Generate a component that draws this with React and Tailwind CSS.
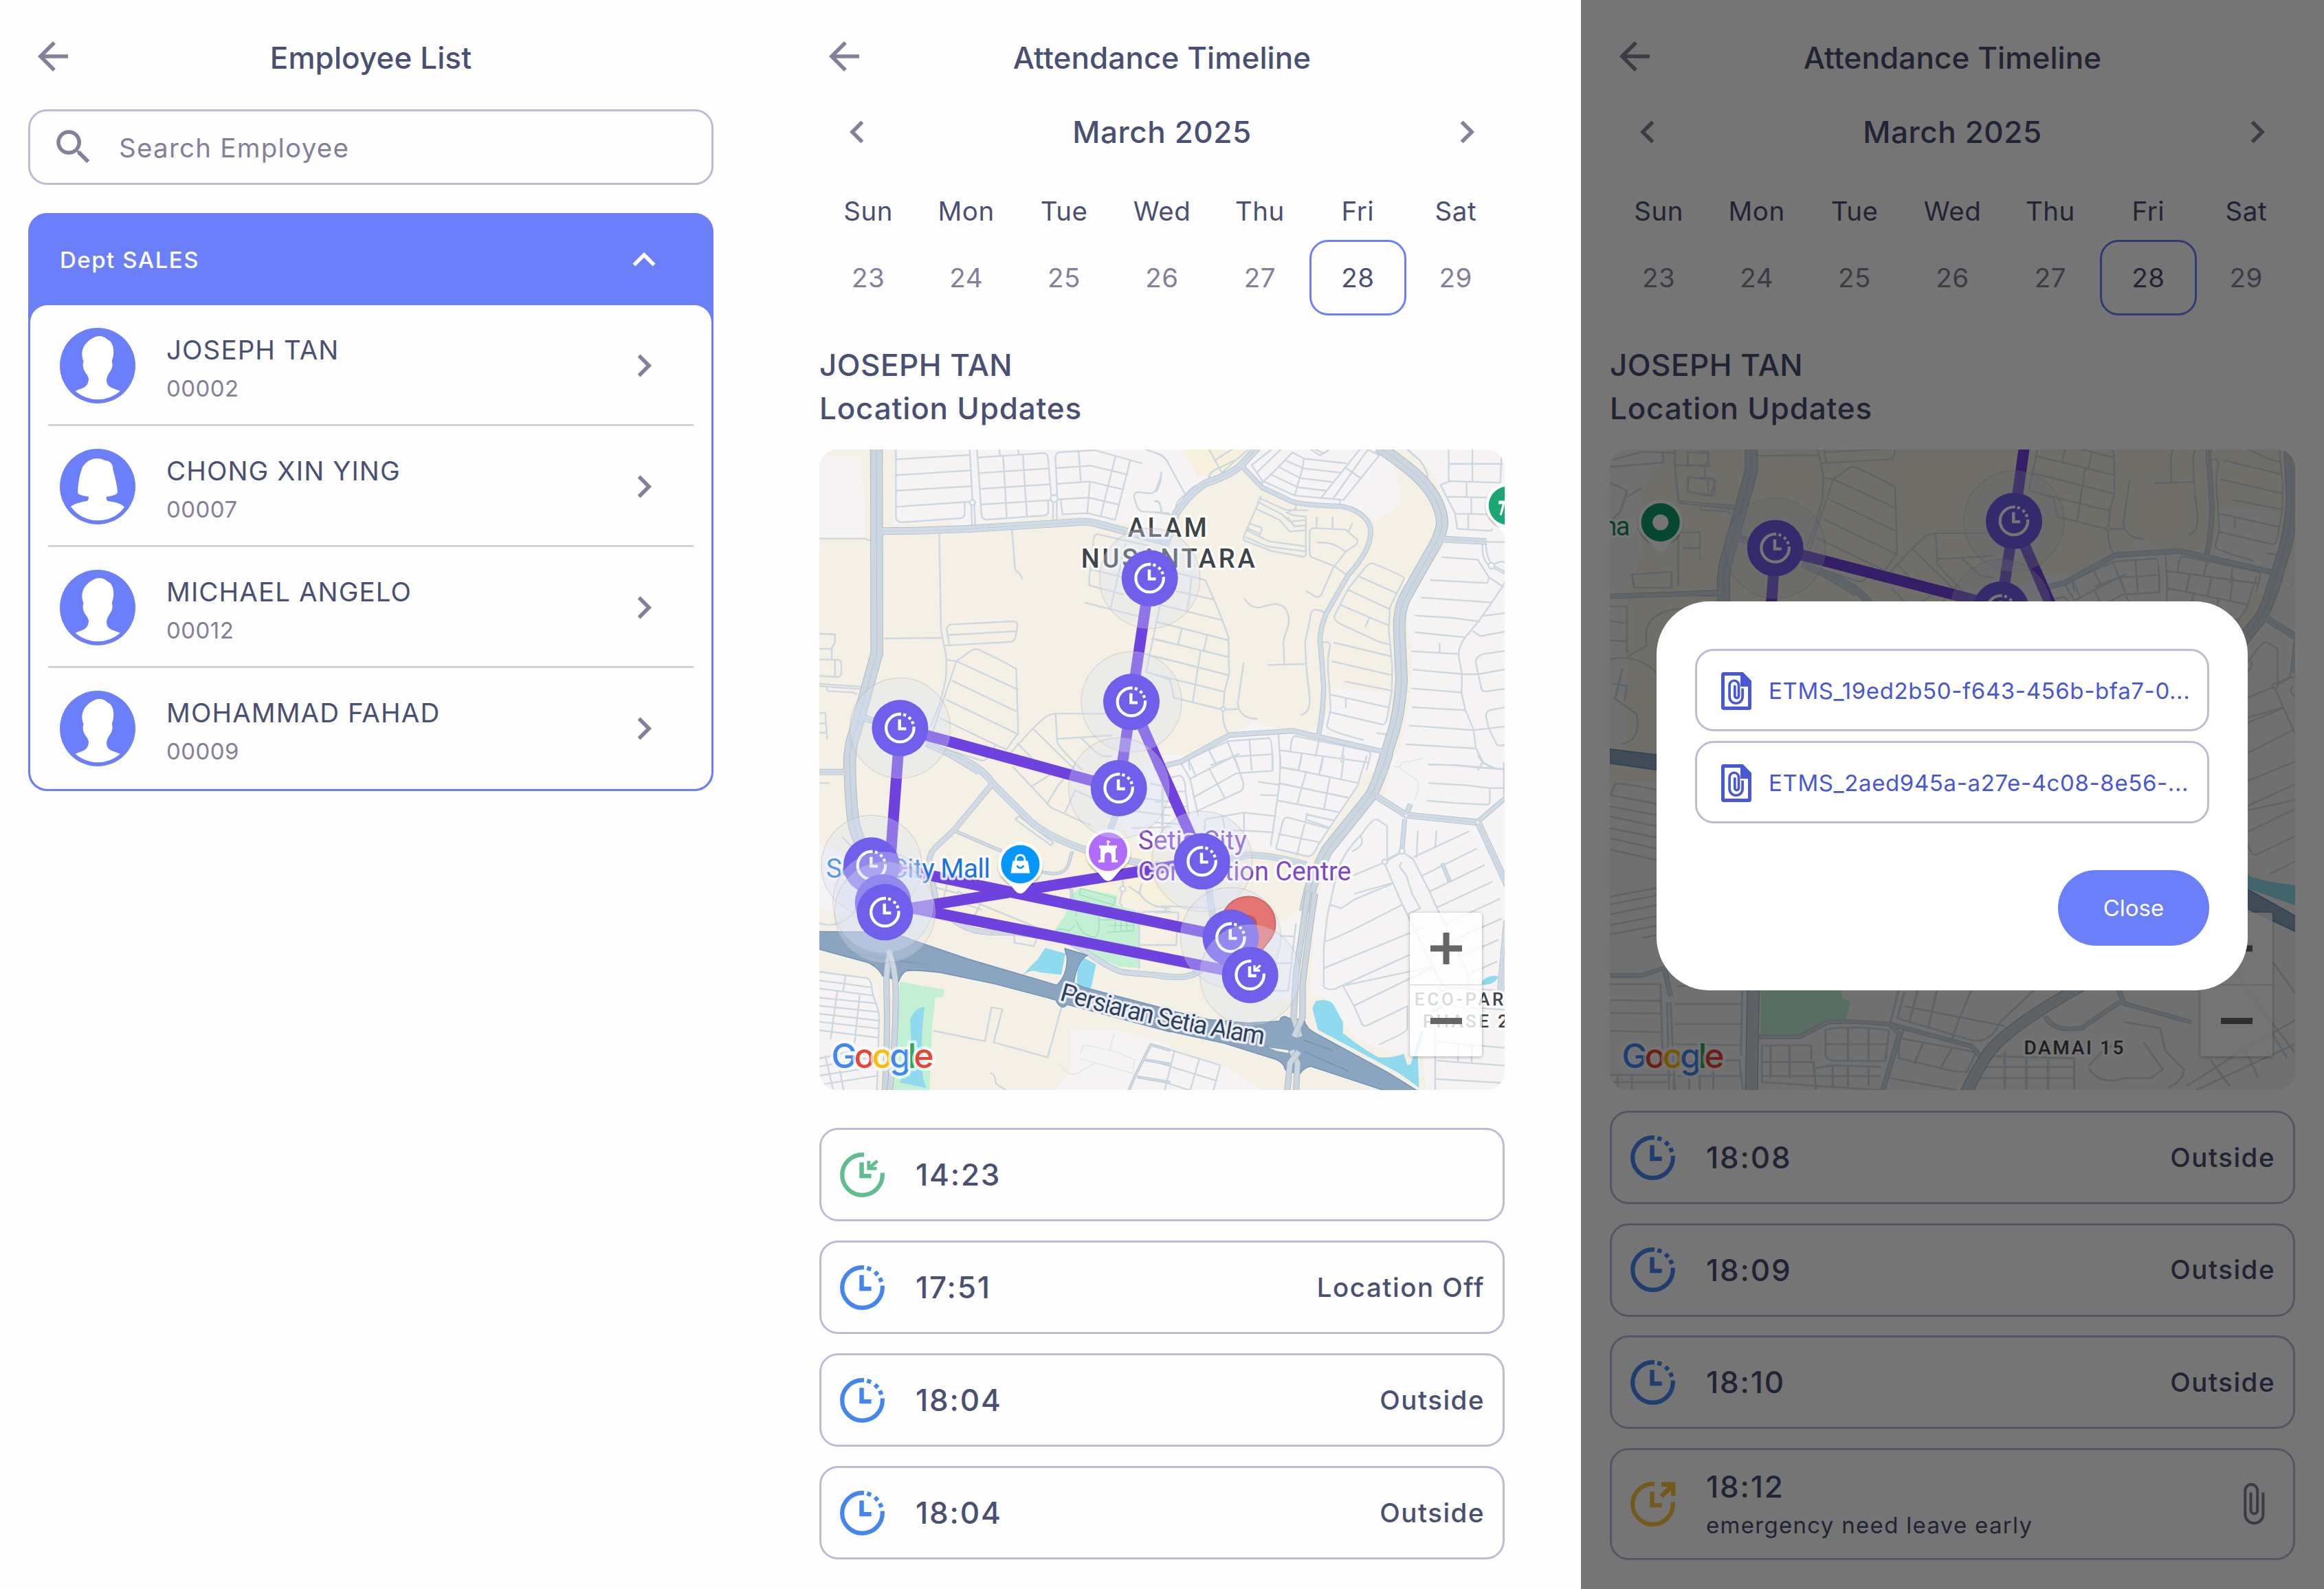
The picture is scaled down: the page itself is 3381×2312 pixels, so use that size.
import React from 'react';
import { MdArrowBack, MdSearch, MdExpandLess, MdChevronRight, MdChevronLeft, MdAttachFile } from 'react-icons/md';

/* ---------- map data: four tiles, each with its own local grid ---------- */

const tiles = [
  {
    transform: 'translate(-11.3 -14) scale(0.33333)',
    areas: [
      ['#f5f3f4', 'M34 72L215 75L235 330L233 428L34 430Z M368 42L1562 42L1562 400L1240 345L1150 335L1040 328L900 350L625 374L600 355L355 372Z'],
    ],
    minor: [
      'M368 42V330Q368 360 395 360L650 342Q668 340 668 320V275',
      'M368 85L690 66 M368 154L697 133 M368 222L700 202 M368 292L690 270 M690 42L702 262 M697 286L700 370 M710 286L714 370',
      'M722 42L742 330Q745 350 770 348L1015 330Q1035 328 1033 310L1032 265',
      'M725 77L1010 58Q1030 57 1032 80L1045 240 M820 42L822 70 M902 42L904 64 M836 70L852 340 M922 64L940 335',
      'M730 145L1036 125 M735 214L1041 194 M742 282L1045 263 M1054 272V375 M1070 272V375',
      'M1072 240L1064 75Q1066 55 1085 54L1235 45L1440 102 M1070 123L1220 113L1380 152 M1070 192L1215 182L1362 217 M1075 260L1210 252L1342 283',
      'M1088 262L1095 325L1205 320L1325 349L1390 92 M1166 54L1175 184 M1215 182L1203 322 M1326 72L1262 332',
      'M1460 42L1530 68Q1550 85 1560 110 M1525 142Q1528 160 1508 205Q1495 240 1470 233L1420 228Q1400 235 1412 265Q1425 315 1450 313L1560 320 M1497 268L1512 268Q1522 275 1527 313',
      'M34 431H230L258 440 M557 395L565 830L572 870L585 930Q592 960 585 1050L560 1150L520 1250 M318 867L570 864',
      'M590 960L632 966L700 918Q715 910 735 918L850 975L893 1000L902 1280L850 1352L770 1315L562 1215 M632 966L530 1270 M632 966L900 1090 M615 1052L900 1188 M590 1135L902 1285',
      'M602 898L590 830Q590 808 610 806L880 792Q900 793 898 815L890 860Q885 882 865 882L580 898 M595 852L895 835 M875 395L888 565L912 590L920 607',
      'M1225 490L1232 430Q1238 410 1250 412L1470 462 M1218 565L1350 598 M1225 490L1212 600V635L1360 675 M1195 711L1425 770 M1370 455L1303 740',
      'M34 846L102 849V885L88 908V955 M34 912H90 M34 958L115 960Q130 962 130 980V1020Q126 1036 110 1035L34 1030 M102 960V1032 M34 1065L225 1078 M34 1075L220 1088 M66 1078Q66 1095 75 1097L180 1102L197 1110 M34 1192H60L68 1305 M34 1238H62 M34 1278H64',
      'M1280 1195H1060Q1040 1197 1020 1210L965 1260L865 1370 M965 1260L1150 1440 M900 1325L1010 1440 M1065 1197L1072 1320Q1078 1340 1180 1440 M1075 1305L1310 1290 M1175 1300L1240 1362Q1265 1385 1308 1382 M500 1320L740 1400Q770 1405 800 1335',
      'M1560 1045L1460 1012L1520 725 M1470 940L1560 962 M1485 868L1560 886 M1503 795L1560 808',
    ],
    ways: [
      ['M300 398L460 397L700 388L1065 365L1185 357Q1215 357 1240 364L1562 450', 28],
      ['M230 1215L300 1235 M500 1325L600 1370L700 1430L730 1450', 24],
      ['M283 30L285 930L230 1130L185 1290Q165 1340 166 1450', 50],
    ],
    rings: [[702, 274, 12], [1059, 256, 16]],
  },
  {
    transform: 'translate(488.7 -14) scale(0.338 0.33333)',
    areas: [
      ['#f5f3f4', 'M-5 42H460L370 110L215 190L120 280L60 400L-5 380Z'],
      ['#f7f0dc', 'M120 42H440L370 110L225 150L185 158Q140 100 120 42Z'],
      ['#f4f0e5', 'M370 112L200 195L225 150Z'],
      ['#f5f3f4', 'M420 42H980L1040 140Q1060 230 1055 280L940 360L900 315L800 285L600 262L460 200L370 110Z'],
      ['#f5f3f4', 'M1085 30H1515V1450H1020L1070 1280L1100 1100L1105 900L1085 820V750L1120 650L1260 440V320L1200 150Z'],
      ['#f5f3f4', 'M755 1080L1000 1105L1010 1290L1000 1450H145L150 1395L320 1300L420 1225L530 1265L640 1275Q740 1250 740 1180Z'],
    ],
    minor: [
      'M232 42L290 150 M255 90L330 42 M290 140L400 42 M0 55Q40 70 55 100L130 240 M25 142Q30 180 5 225 M0 268Q18 265 22 290L28 315 M0 315L80 330 M232 180Q225 140 270 125L340 90 M90 310Q80 270 130 240Q160 195 200 197',
      'M465 185L415 110L500 42 M440 140L540 42 M455 190L500 150L590 55 M670 42L710 68L725 55 M690 42L725 60L745 45 M590 55L640 82L820 102 M560 90L640 125L795 143 M535 120L625 167L765 184 M495 150L615 207L735 222',
      'M460 178L600 243L810 262L970 60 M640 82L635 120L600 243 M880 42L712 255 M915 42L765 258 M817 120L885 168 M795 262V290 M915 42L960 65',
      'M1085 42L1140 90Q1175 140 1172 170 M1263 42V183L1228 197L1290 320L1300 388L1440 397L1452 390 M1263 105H1492 M1365 42V183 M1492 42L1485 187 M1263 180L1485 187 M1340 185V248 M1255 248L1430 252 M1360 250V322 M1290 322L1440 325 M1347 322V390',
      'M1420 445L1515 447 M1408 450Q1405 530 1440 548 M1424 450Q1420 500 1450 545 M1450 548Q1490 520 1515 540 M1460 562L1515 590 M1460 552L1515 580',
      'M1235 512L1388 523L1436 600L1430 625L1187 612 M1436 600L1495 640L1447 712L1385 800L1335 860Q1300 910 1307 950L1320 1020L1318 1105L1335 1180L1370 1265L1380 1345L1410 1405L1390 1440',
      'M1147 688L1447 710 M1120 767L1280 777L1395 793 M1120 840L1335 862 M1105 923L1307 935 M1224 888V930 M1110 1003L1330 1023H1390L1515 1000 M1105 1085L1320 1103 M1107 1167L1335 1180 M1095 1247L1370 1267L1515 1250 M1080 1329L1380 1347 M1178 1417L1300 1420L1515 1440',
      'M1415 768L1515 755 M1368 835L1400 857L1515 835 M1515 920L1410 935Q1375 950 1380 975L1405 1090Q1410 1100 1425 1098L1515 1085 M1515 1165L1440 1180Q1420 1190 1424 1210L1435 1260L1470 1330Q1478 1338 1515 1330 M1495 640L1515 605 M1410 1405L1450 1435',
      'M455 247L380 425Q378 438 390 442L500 485L635 510Q648 508 648 500V335L600 330L565 318L605 300V280 M450 255L560 305L655 308 M440 270L545 325L580 357L648 350 M432 300L535 350L578 400L648 395 M570 340L600 378L648 373 M405 365L455 382Q465 390 445 420 M390 425L480 465L648 487 M395 395L490 443L648 465 M395 385L445 408',
      'M695 338V385 M763 338V387 M848 365L832 402 M665 400Q668 385 685 385L820 392L862 430Q882 440 860 460L820 488L765 560L715 675Q705 690 690 685L650 660 M665 400L664 495Q665 510 680 515L765 548L825 590 M698 448Q760 445 800 475L820 488',
      'M385 695Q410 735 450 732Q490 720 515 716Q555 720 565 745Q580 780 573 810Q545 880 553 900L555 980 M487 983L650 978 M735 760Q720 740 680 742Q668 750 665 790L645 880L650 990L665 1130Q665 1195 628 1200',
      'M770 885L1015 945 M763 967L1020 1027 M817 1055L1020 1095 M720 885Q750 875 753 900Q735 960 750 1080L755 1180L738 1250Q740 1270 895 1310 M755 1112L1005 1168 M820 1132V1168 M750 1188L980 1243Q995 1240 1000 1200L1018 1100L1020 990L1005 830L1010 730L1072 605Q1070 595 940 540Q925 535 905 555L830 650L770 770Q770 790 800 805L960 880L1012 895',
      'M875 595L1040 670 M832 655L1010 740 M800 722L1005 810 M920 780L905 815 M955 1280L1000 1287',
      'M90 580L215 612L250 690L290 790L315 860L318 1020L298 1100L292 1175Q285 1240 315 1283 M155 600L147 690L135 750 M90 660L250 697 M20 720L288 787 M10 795L315 875 M0 870L315 948 M0 945L318 1028 M0 1025L298 1100',
      'M115 822L97 895 M224 850L208 922L230 925 M195 920L183 1000L162 1140 M62 1040L80 1125L290 1178L355 1175 M380 975L355 1150Q360 1215 437 1218',
      'M150 1440Q135 1395 160 1385L315 1315L490 1302Q505 1305 505 1440 M405 1305L415 1440 M310 1315L360 1440 M232 1358L262 1415 M240 1420L335 1383L505 1372',
      'M530 1283L540 1440 M582 1355Q585 1290 605 1293L915 1358Q932 1365 925 1380L910 1440 M705 1310L690 1380 M812 1335L800 1405 M537 1355L915 1408 M630 1372L617 1440 M722 1390L712 1440 M540 1430L600 1440',
    ],
    ways: [
      ['M440 34L370 110Q330 150 215 190Q150 230 90 320L45 455', 28],
      ['M370 112L460 208L590 270Q640 285 800 290Q900 310 925 380Q940 470 830 590L735 760Q700 850 712 900L725 1080Q722 1200 702 1290', 17],
      ['M-5 1434L110 1405L320 1288L590 1270L985 1362', 18],
      ['M1240 434L1425 444', 24],
      ['M960 30Q1080 110 1140 170Q1235 270 1235 370Q1225 430 1180 500L1080 680Q1050 730 1050 820L1060 1050Q1050 1200 1020 1290L970 1450', 48],
    ],
    rings: [[1447, 549, 13], [292, 1175, 9]],
  },
  {
    transform: 'translate(-11.3 446) scale(0.33333)',
    areas: [
      ['#f5f3f4', 'M34 390L180 430L240 660L100 690L34 660Z M34 940L245 968L290 1000V1460H34Z M1130 1192L1330 1195L1565 1260V1460H1060L1130 1380Z'],
      ['#f5f3f4', 'M1310 60L1565 20V400L1430 380L1320 280Z'],
      ['#f7f0dc', 'M520 600L700 610L970 740L960 770L700 770L545 640Z M1130 400L1565 440V640H1180Z'],
      ['#c3f0d5', 'M1170 575L1335 610L1330 650L1430 680V925L1350 920L1260 890L1060 760L1110 690L1130 610Z M385 985L580 1020L575 1050L540 1055L525 1200L515 1460H355Z'],
      ['#8fdaee', 'M1020 838L1108 862L1090 955L1000 945Q960 925 920 958Q970 900 985 890Z M1185 878L1242 910L1220 1010L1190 1025L1158 990L1160 925Z M430 1150Q450 1100 493 1095L485 1170L480 1240L485 1300V1400L502 1450L385 1425L395 1400L430 1395L438 1320Z'],
    ],
    green: 'M1175 578L1325 620L1318 650L1168 605Z M1155 700Q1150 640 1190 632Q1230 640 1250 690Q1265 760 1240 790Q1180 790 1155 720 M1255 715H1405V762L1290 770 M1325 720V762 M1350 720V762 M1375 720V762 M1300 740H1405 M1065 760Q1100 750 1120 765L1150 740 M1240 690L1320 650',
    minor: [
      'M34 118H75 M135 355L180 400 M34 730Q130 760 200 660',
      'M880 48L1045 225L1215 302 M1075 60L965 130 M1030 205L1075 130L1150 40 M1105 250L1150 150L1230 185 M905 262L890 278L1045 390L1055 378Z',
      'M34 942L245 970Q262 980 265 1030L290 1110L295 1140L285 1460 M34 980L262 1010 M34 1015L268 1045 M34 1055L285 1080 M34 1090L290 1117 M34 1125L292 1155 M34 1160L294 1190 M34 1197L294 1230 M148 962L138 1025 M112 1030L83 1235 M210 1045L188 1250',
      'M34 1320L190 1285 M34 1355L290 1310 M34 1395L290 1355 M34 1435L290 1395 M60 1310L95 1460 M110 1300L140 1460',
      'M535 1200L757 1245L785 1097L833 1105L795 1250L1030 1315L1090 1100 M783 1385Q800 1385 805 1430L850 1460',
      'M885 785V815L970 830L982 800 M545 575L640 600 M590 565L575 625 M640 590L720 640L975 745 M740 640L710 700 M680 650L740 670',
      'M1360 500L1358 580L1345 640L1355 655 M1385 570L1430 600L1440 560 M1430 590Q1450 655 1560 665 M1430 825H1565 M1435 690L1450 680L1565 678 M1430 680V925',
      'M1480 120L1565 140 M1420 180L1565 200 M1400 240L1565 260 M1530 60V360 M1400 315L1565 310',
    ],
    faint: 'M1175 1300L1185 1260L1330 1290L1410 1325L1400 1385L1170 1320 M1320 1215L1300 1285 M1080 1345Q1120 1400 1160 1385L1230 1345',
    ways: [
      ['M34 70H155', 22],
      ['M600 -10Q740 40 790 120L960 290Q1030 350 1180 405L1420 465Q1650 505 1900 432', 26],
      ['M790 120L620 325L540 400Q500 440 520 500L545 640Q640 770 780 770L900 772', 20],
      ['M900 772L1100 800Q1180 840 1220 870Q1320 940 1370 945L1565 962', 20],
      ['M620 325L830 415', 10],
      ['M985 500Q1110 540 1125 460L1138 415', 9],
      ['M1110 540L1135 590V620', 9],
      ['M1330 250L1300 330', 22],
      ['M1385 1460L1410 1400L1450 1320L1480 1260L1565 1285 M1450 1325L1565 1345 M1420 1400L1565 1425', 7],
      ['M166 -10Q168 200 185 300Q200 360 240 440L320 680L335 830', 48],
    ],
    rings: [[1358, 580, 12]],
  },
  {
    transform: 'translate(488.7 446) scale(0.338 0.33333)',
    areas: [
      ['#f5f3f4', 'M-5 -5H930L880 110L720 390L660 430L380 400L150 420L-5 420Z'],
      ['#f5f3f4', 'M1020 -5H1515V1300L1130 1310L1060 1300L930 1265L840 1210L720 1040L665 1050L690 640L760 430L930 200L990 165Z'],
      ['#f5f3f4', 'M520 720L560 720L640 650L620 1050L430 1070L450 900Z'],
      ['#f5f3f4', 'M-5 1260L280 1345L450 1450V1460H-5Z M1150 1300L1515 1285V1460H1165Z'],
      ['#8fdaee', 'M690 1070Q760 1050 780 1110L808 1160V1210Q880 1270 960 1315Q1020 1320 1070 1300L1085 1350L1100 1345L1110 1310H1130L1136 1448L1050 1385L830 1265L700 1195L676 1100Z M1403 990Q1430 950 1476 962Q1470 985 1440 995L1410 1000Z M1180 1118L1230 1092L1240 1095L1200 1118Z M1145 1200H1155L1125 1310H1110Z'],
    ],
    minor: [
      'M175 90L150 30 M150 100L235 55L360 -10 M165 180L350 75L505 65V0 M232 55L300 185 M340 0L380 120Q380 150 365 155L180 240 M110 30L150 100L185 260 M35 100L105 85Q130 95 130 150L145 260 M33 100V300 M130 155H35 M140 220L30 225 M0 200H33 M0 290L140 300',
      'M538 0L535 120L497 390 M538 48L600 60L875 118 M445 113L525 125L538 120L835 183 M455 170L525 172 M530 195L790 245 M630 0L617 60 M722 0L705 80 M812 0L800 100 M650 68L612 205 M752 90L727 230 M910 0L870 130L700 390Q680 440 655 438L520 405',
      'M215 325Q210 280 220 275L380 247L518 262 M382 250V330 M210 325L380 325L508 333 M290 265L300 330 M650 255L770 282 M655 280L750 312 M545 300Q550 268 570 268L740 315 M548 290L520 400 M530 340L710 377 M655 250L610 430',
      'M780 520Q800 430 890 340Q935 270 955 277L998 305V450 M885 350Q905 390 850 415 M855 520L985 465L1062 420 M780 520L740 700L725 840V1005Q730 1020 770 1018L1090 870 M998 450L1062 418L1110 450L1180 590L1220 680L1345 950V1010 M985 465L1060 640L1150 830L1240 1010 M1060 465Q1045 480 1060 495L1080 520L1105 600L1140 665L1090 690 M860 600L1018 555',
      'M755 650L800 665L860 625L1018 558 M730 808Q760 810 1060 650 M728 925L1150 750 M808 1003L1190 920 M808 1003L855 1090L890 1170Q895 1180 910 1177L1085 1092V1190Q1085 1205 965 1258 M855 1090L1190 925',
      'M1115 440L1348 330 M1150 522L1382 405 M1180 592L1415 477 M1215 660L1450 549 M1245 735L1482 624 M1280 805L1490 710 M1315 875L1475 803 M1345 955L1470 897 M1130 330L1125 440 M1210 328L1205 400',
      'M1175 37L1290 40L1380 50L1515 58 M1178 118L1340 128L1440 140L1515 140 M1440 140V195Q1440 215 1420 212L1290 205L1172 195 M1500 30V190 M1390 0L1410 30L1460 52 M1410 30L1392 55',
      'M1205 1200V1460 M1220 1248L1515 1275 M1215 1330L1515 1352 M1210 1410L1515 1428 M1303 1255V1335 M1362 1260V1340 M1240 1010L1345 1015L1500 1025 M1245 1090L1515 1108',
      'M605 735L572 1025H480 M540 785L600 788 M520 905L585 903 M0 658L45 655L260 665 M0 683H100L90 825H0 M45 655V683',
      'M0 1335L265 1418 M82 1290L40 1460 M190 1320L150 1460 M280 1350L250 1460 M0 1262L280 1350 M0 1410L150 1460',
    ],
    faint: 'M1030 45L1050 50Q1060 20 1090 25L1150 10 M1050 50L1130 110Q1140 140 1115 195',
    ways: [
      ['M390 432Q500 430 650 475', 24],
      ['M935 165L1080 258L1390 290L1515 565', 24],
      ['M1515 720L1488 1020', 28],
      ['M1390 285L1505 185', 16],
      ['M1080 258L1098 210', 18],
      ['M1074 275L1062 410', 16],
      ['M-5 955Q130 980 180 945L235 900', 22],
      ['M228 560L250 720', 24],
      ['M1235 468L1268 550', 12],
      ['M1000 -15Q960 110 930 170L740 410Q680 530 665 590L645 680', 48],
    ],
    rings: [[1080, 260, 9], [1062, 415, 12], [988, 462, 11], [1388, 290, 9], [1238, 1013, 12]],
  },
];

function MapBase() {
  return (
    <g fill="none" strokeLinecap="round" strokeLinejoin="round">
      {tiles.map((t, i) => (
        <g key={i} transform={t.transform}>
          {t.areas.map(([fill, d], k) => (
            <path key={k} d={d} fill={fill} />
          ))}
          {t.green && <path d={t.green} stroke="#a3dabc" strokeWidth="4" />}
        </g>
      ))}
      {tiles.map((t, i) => (
        <g key={i} transform={t.transform} stroke="#cdd7e0" strokeWidth="7">
          {t.minor.map((d, k) => (
            <path key={k} d={d} />
          ))}
          {t.faint && <path d={t.faint} stroke="#e5e6e9" strokeWidth="5" />}
        </g>
      ))}
      {tiles.map((t, i) => (
        <g key={i} transform={t.transform} strokeLinecap="butt">
          {t.ways.map(([d, w], k) => (
            <path key={k} d={d} stroke={w > 40 ? '#a8b3be' : '#b4c1cd'} strokeWidth={w + 5} />
          ))}
        </g>
      ))}
      {tiles.map((t, i) => (
        <g key={i} transform={t.transform}>
          <g strokeLinecap="butt">
            {t.ways.map(([d, w], k) => (
              <path key={k} d={d} stroke={w > 40 ? '#cbd6e1' : '#d0dbe5'} strokeWidth={w} />
            ))}
            {t.ways.map(([d, w], k) =>
              w > 20 ? <path key={k} d={d} stroke={w > 40 ? '#b4c0cc' : '#c0ccd7'} strokeWidth="2.5" /> : null
            )}
          </g>
          {t.rings.map(([x, y, r], k) => (
            <circle key={k} cx={x} cy={y} r={r} fill="#f5f3f4" stroke="#cdd7e0" strokeWidth="7" />
          ))}
        </g>
      ))}
      {/* expressway */}
      <g transform={tiles[2].transform} fill="#8ba4c0" stroke="#6f91b5" strokeWidth="4">
        <path d="M20 766L250 768Q400 780 430 800L680 885L1070 1000Q1115 960 1115 880L1105 840L1205 870Q1160 890 1145 990L1190 1010L1564 1108V1204L1115 1085Q1090 1115 1065 1065L800 995L560 945Q430 930 410 940Q390 955 380 985L345 970L310 960Q290 920 240 900L20 840Z" />
        <path d="M140 850L330 878L540 914L330 895Z" fill="#7f9cbc" stroke="none" />
      </g>
      <g transform={tiles[3].transform} fill="#8ba4c0" stroke="#6f91b5" strokeWidth="4">
        <path d="M55 1108L230 1150L400 1165L535 1157Q540 1135 560 1137L590 1150H640Q650 1190 690 1210L1000 1380L1130 1462H990L670 1355Q640 1360 620 1390L560 1370Q555 1340 520 1325L300 1255L55 1200Z" />
        <path d="M480 1270L575 1283L574 1298L520 1288Z" fill="#f4f0e5" strokeWidth="2" />
        <path d="M640 1290L830 1375 M640 1240L760 1285" fill="none" stroke="#7090b3" />
      </g>
      <g transform={tiles[3].transform}>
        {['M658 590Q628 800 606 950L595 1140L622 1225', 'M688 600Q650 850 634 1000V1140L598 1225', 'M586 1285L612 1340L606 1465', 'M618 1290L580 1340L568 1465'].map((d, k) => (
          <g key={k} strokeLinecap="butt">
            <path d={d} stroke="#a8b3be" strokeWidth="27" />
            <path d={d} stroke="#cbd6e1" strokeWidth="22" />
          </g>
        ))}
      </g>
      <g transform={tiles[2].transform} strokeLinecap="butt">
        {['M345 850Q325 920 327 1010Q334 1200 320 1465', 'M335 850Q365 920 367 1010Q370 1250 340 1465'].map((d, k) => (
          <g key={k}>
            <path d={d} stroke="#a8b3be" strokeWidth="27" />
            <path d={d} stroke="#cbd6e1" strokeWidth="22" />
          </g>
        ))}
      </g>
    </g>
  );
}

/* ---------- map pieces ---------- */

function ClockGlyph({ kind }) {
  return (
    <>
      <path d="M35 3.2H32.5A29.3 29.3 0 1 0 61.8 32.5V29.5" fill="none" stroke="currentColor" strokeWidth="6.2" />
      <path d="M28.3 14.3H34.8V31H45.6V37.3H28.3Z" fill="currentColor" />
      {kind === 'track' && (
        <g fill="currentColor">
          <rect x="-3.1" y="-3.1" width="6.2" height="6.2" transform="translate(42.3 4.9) rotate(18)" />
          <rect x="-3.1" y="-3.1" width="6.2" height="6.2" transform="translate(53 11.8) rotate(45)" />
          <rect x="-3.1" y="-3.1" width="6.2" height="6.2" transform="translate(59.2 21.2) rotate(68)" />
        </g>
      )}
      {kind === 'in' && <path d="M41.8 12V23.2H53.5 M43 22L54.5 12" fill="none" stroke="currentColor" strokeWidth="4.8" />}
      {kind === 'out' && <path d="M45 .5H65.500V20.500H59V12.500L47 23.800L42.600 19.300L54 7.300H45Z" fill="currentColor" />}
    </>
  );
}

function Marker({ x, y, kind = 'track' }) {
  return (
    <g transform={`translate(${x} ${y})`}>
      <circle r="73" fill="#d9dff7" fillOpacity=".32" stroke="#c4b3a4" strokeOpacity=".45" strokeWidth="1.2" />
      <circle r="41" fill="#705fea" />
      <g transform="translate(-22.5 -22.5) scale(.69)" color="#fff">
        <ClockGlyph kind={kind} />
      </g>
    </g>
  );
}

function Pin({ x, y, color, children }) {
  return (
    <g transform={`translate(${x} ${y})`}>
      <circle cy="1.5" r="33.5" fill="#000" fillOpacity=".15" />
      <path d="M-29 15Q-16 28 -8 38Q0 47 8 38Q16 28 29 15A32.7 32.7 0 1 0 -29 15Z" fill="#fff" />
      <circle r="28" fill={color} />
      {children}
    </g>
  );
}

function Label({ x, y, size, length, fill, weight = 400, children }) {
  return (
    <text
      x={x}
      y={y}
      fontSize={size}
      textLength={length}
      fill={fill}
      fontWeight={weight}
      stroke="#fff"
      strokeOpacity=".85"
      strokeWidth="7"
      strokeLinejoin="round"
      paintOrder="stroke"
      className="font-['Roboto',sans-serif]"
    >
      {children}
    </text>
  );
}

function MapFrame({ children }) {
  return (
    <div className="relative h-[932px] overflow-hidden rounded-[27px] bg-[#f4f0e5]">
      <svg className="block h-[932px] w-[997px]" viewBox="0 0 997 932">
        {children}
        <text x="17.5" y="899.5" fontSize="50" fontWeight="500" textLength="149" stroke="#fff" strokeOpacity=".65" strokeWidth="9" strokeLinejoin="round" paintOrder="stroke" className="font-['Inter',sans-serif]">
          <tspan fill="#4285f4">G</tspan>
          <tspan fill="#ea4335">o</tspan>
          <tspan fill="#fbbc05">o</tspan>
          <tspan fill="#4285f4">g</tspan>
          <tspan fill="#34a853">l</tspan>
          <tspan fill="#ea4335">e</tspan>
        </text>
      </svg>
      <div className="absolute right-[33px] bottom-[49px] flex h-[209px] w-[105px] flex-col rounded-[4px] bg-white/80 shadow-[0_1px_5px_rgba(0,0,0,0.3)]">
        <div className="flex flex-1 items-center justify-center border-b-2 border-[#e4e4e4]">
          <svg className="h-[46px] w-[46px]" viewBox="0 0 46 46">
            <path d="M0 23H46M23 0V46" stroke="#666" strokeWidth="9" />
          </svg>
        </div>
        <div className="flex flex-1 items-center justify-center">
          <div className="h-[9px] w-[46px] bg-[#666]" />
        </div>
      </div>
    </div>
  );
}

const route =
  'M1672 841.3L1645.3 1021.3L1627 1146.7L1308.7 1059.3L1294 1259.3 M1267.3 1256L1789.8 1364.3 M1645.3 1021.3L1748 1253.3L1286.7 1327.3 M1284 1313L1818 1418.7';

function DayMap() {
  return (
    <MapFrame>
      <MapBase />
      <g transform="translate(-1191.3 -654)">
        <path d={route} fill="none" stroke="#6f42e0" strokeWidth="16" />
        <Label x="1640" y="781" size="38" length="115" fill="#3f4446" weight="500">ALAM</Label>
        <Label x="1572" y="826" size="38" length="253" fill="#3f4446" weight="500">NUSANTARA</Label>
        <Label x="1201" y="1277" size="39" length="239" fill="#1b74e4">Setia City Mall</Label>
        <Label x="1655" y="1236" size="38" length="158" fill="#8147c9">Setia City</Label>
        <Label x="1655" y="1281" size="38" length="310" fill="#8147c9">Convention Centre</Label>
        <path id="highwayLabel" d="M1540 1455Q1680 1496 1850 1522" fill="none" />
        <text fontSize="37" fill="#2e405c" stroke="#e9edf3" strokeWidth="7" strokeLinejoin="round" paintOrder="stroke" className="font-['Roboto',sans-serif]">
          <textPath href="#highwayLabel" textLength="305">Persiaran Setia Alam</textPath>
        </text>
        <Label x="2057" y="1463" size="26" length="150" fill="#3f4446" weight="500">ECO-PARK</Label>
        <Label x="2069" y="1495" size="26" length="124" fill="#3f4446" weight="500">PHASE 2</Label>
        <Pin x="1483.7" y="1257.5" color="#0496ff">
          <path d="M-11 -5H11L14 13H-14Z" fill="#fff" />
          <path d="M-6.500 -4V-7A6.500 6.500 0 0 1 6.500 -7V-4" fill="none" stroke="#fff" strokeWidth="3" />
          <path d="M-5 2Q0 9 5 2" fill="none" stroke="#0496ff" strokeWidth="2.600" />
        </Pin>
        <Pin x="1611.300" y="1239.300" color="#b06bff">
          <path d="M-11 14V-5H-13V-9H-1.500V-17L4 -14.500L1 -12.500V-9H13V-5H11V14H5V6Q5 1 0 1Q-5 1 -5 6V14Z M-14 12H-5V15.500H-14Z M5 12H14V15.500H5Z" fill="#fff" />
        </Pin>
        <Pin x="2193" y="735.600" color="#1aa774">
          <path d="M-13 -7H-4L-6 4L-9 14H-12L-8 -2H-14Z" fill="#fff" />
        </Pin>
        <Marker x={1672} y={841.3} />
        <Marker x={1308.7} y={1059.3} />
        <Marker x={1645.3} y={1021.3} />
        <Marker x={1627} y={1146.7} />
        <Marker x={1267.3} y={1259.3} />
        <Marker x={1284} y={1313} />
        <Marker x={1286.7} y={1327.3} />
        <Marker x={1748} y={1253.3} />
        <path d="M1813 1420Q1811 1398 1795 1378A39.500 39.500 0 1 1 1845 1370Q1825 1392 1823 1420Z" fill="#ea4335" stroke="#c0302a" strokeWidth="2" />
        <circle cx="1814" cy="1345" r="14" fill="#b3141a" />
        <Marker x={1789.8} y={1364.3} />
        <Marker x={1818} y={1418.7} kind="in" />
      </g>
    </MapFrame>
  );
}

function ShiftedMap() {
  return (
    <MapFrame>
      <g transform="translate(119.7 -274) scale(1.031 1.03)">
        <MapBase />
      </g>
      {/* area west of the main road */}
      <g transform="translate(-51.5 -54) scale(.6958 .5485)" fill="none" stroke="#cdd7e0" strokeWidth="4.500" strokeLinejoin="round">
        <path d="M74 98H262V950H74Z" fill="#f4f0e5" stroke="none" />
        <path d="M74 98H195L135 210L150 300L130 420L110 480V900H74Z" fill="#f5f3f4" stroke="none" />
        <path d="M74 128L140 105L210 107 M74 145L185 133V108 M210 98V140L285 143 M210 140L217 235L345 250 M217 240L345 260 M217 265V460 M74 188Q110 205 110 210L95 265L74 290 M110 225L140 200" />
        <path d="M237 105V140H280V110Z M237 172V210L285 220L295 180Z M120 430L203 423V465H125Z M225 318H262V360H225 M74 515H110V640 M74 553L112 560 M74 605L112 608" />
        <path d="M240 520Q160 520 150 580V620Q120 640 110 650 M74 655Q130 640 172 690 M100 680L85 760L130 800Q140 870 100 880 M80 720L110 725L105 765" />
        <path d="M74 488L310 478" stroke="#b4c1cd" strokeWidth="14" />
        <path d="M74 488L310 478" stroke="#d0dbe5" strokeWidth="11" />
        <path d="M74 975L262 990V1560H74Z" fill="#f5f3f4" stroke="none" />
        <path d="M74 893L262 922V965L74 931Z" fill="#8ba4c0" stroke="#6f91b5" strokeWidth="3" />
        <path d="M85 985Q120 985 200 1010 M85 985L74 1020 M74 1015L200 1045 M74 1045L200 1075 M74 1072L200 1105 M74 1103L200 1135 M74 1130L200 1165 M74 1160L200 1195 M74 1285L200 1255 M74 1305L200 1275 M74 1332L200 1300 M74 1360L200 1330 M74 1385L200 1355 M74 1410L200 1380" />
        <path d="M1320 1235H1520V1560H1320Z" fill="#f5f3f4" stroke="none" />
        <path d="M1380 1215L1409 1230Q1450 1245 1480 1250L1515 1255V1312L1380 1250Z" fill="#8fdaee" stroke="none" />
        <path d="M1380 1245L1520 1345V1385L1380 1300Z" fill="#8ba4c0" stroke="#6f91b5" strokeWidth="3" />
      </g>
      {/* southern housing blocks */}
      <g transform="translate(-51.5 746) scale(.6958 .5816)" fill="none" stroke="#cdd7e0" strokeWidth="4.500" strokeLinejoin="round">
        <path d="M70 -60H1515V330H70Z" fill="#f5f3f4" stroke="none" />
        <path d="M388 0H558V72L560 90L577 97L568 145L530 148L480 180L390 185Z" fill="#c3f0d5" stroke="none" />
        <path d="M201 100L210 320 M194 100L198 320 M74 55H180L185 250 M215 60L350 55 M210 105L350 105 M210 155L350 155 M210 205L350 208 M352 0L348 235 M74 95L180 97 M74 127L183 128 M74 172L185 175 M74 282H208V320 M74 300H200 M90 282V320 M120 282V320 M185 250L345 245L352 320 M240 250V320 M262 250V320 M290 250V320 M215 285H350" />
        <path d="M390 208H495V245 M392 208V300L640 320 M410 208V290 M450 208V290 M392 250H500L505 320 M392 285H640 M505 265L540 258L640 262 M525 170V230Q527 245 545 247H650L658 170Q600 160 540 165Z M572 165V245 M615 165V245 M525 205H655 M540 258V310 M572 258V310 M615 258V310" />
        <path d="M680 60L660 155L690 165L650 300 M680 190L840 225L820 275L790 272L678 240Z M730 200L710 255 M790 215L765 265 M690 75L675 140L830 195Q870 205 890 150L970 60 M720 60L700 150 M760 60L740 165 M805 140L830 70 M690 110L900 160 M805 140L790 190 M660 290L800 320" />
        <path d="M870 235L1045 240V320 M860 262H1045 M840 290H1045 M900 225V320 M945 240V320 M990 240V320 M1075 260L1110 215L1145 200 M1150 150L1225 165L1235 220L1275 270Q1270 300 1240 315 M1075 265Q1100 310 1150 290H1205L1230 268L1190 200 M1400 210L1430 290 M1330 245L1370 310 M1460 180L1490 240 M1280 310L1410 210L1515 140 M1300 320L1515 200 M1460 0L1515 90 M1380 0L1400 60L1515 240" />
        <g strokeWidth="11">
          <path d="M74 33H140L188 15L201 85 M385 187L470 187L530 150L575 148L660 155L830 210L852 240 M660 155L680 180L645 320 M985 135Q1000 175 1060 165L1140 100L1290 150 M1135 60L1150 105" stroke="#b4c1cd" />
          <path d="M74 33H140L188 15L201 85 M385 187L470 187L530 150L575 148L660 155L830 210L852 240 M660 155L680 180L645 320 M985 135Q1000 175 1060 165L1140 100L1290 150 M1135 60L1150 105" stroke="#d0dbe5" strokeWidth="8" />
        </g>
        <path d="M375 0L370 330 M1090 40Q920 150 870 220Q840 270 818 330" stroke="#a8b3be" strokeWidth="27" />
        <path d="M375 0L370 330 M1090 40Q920 150 870 220Q840 270 818 330" stroke="#cbd6e1" strokeWidth="23" />
      </g>
      <g transform="translate(-2341.500 -654)">
        <path d="M2957 560L2929.500 758L2910.600 883L2582.200 797.500L2568 1000 M2929.500 758L3040 1010" fill="none" stroke="#6f42e0" strokeWidth="16" />
        <Label x="2331" y="779" size="38" length="40" fill="#128a5b">na</Label>
        <Label x="2944" y="1534" size="28" length="145" fill="#3f4446" weight="500">DAMAI 15</Label>
        <Pin x="2415.200" y="760" color="#109c6a">
          <circle r="11.500" fill="#fff" />
        </Pin>
        <Marker x={2582.2} y={797.5} />
        <Marker x={2929.5} y={758} />
        <Marker x={2910.6} y={887} />
      </g>
    </MapFrame>
  );
}

/* ---------- screens ---------- */

function TopBar({ title }) {
  return (
    <header className="relative flex h-[159px] items-center justify-center pt-[8px]">
      <MdArrowBack className="absolute top-[49px] left-[3px] size-[66px] text-[#85809a]" />
      <h1 className="text-[44px] leading-none font-medium tracking-[0.1px] text-[#4a5073]">{title}</h1>
    </header>
  );
}

function Avatar({ female }) {
  return (
    <svg className="size-[110px] shrink-0" viewBox={female ? '51 580 330 330' : '51 52 330 330'}>
      <circle cx="216" cy={female ? 745 : 217} r="165" fill="#6b7ffb" />
      {female ? (
        <path fill="#fff" d="M129 770Q132 700 152 656Q175 623 215 622Q232 622 250 631Q283 635 283 670Q300 730 303 768Q303 783 255 789Q252 800 260 808Q318 815 333 835Q290 893 216 893Q145 893 99 833Q112 818 170 808Q178 802 177 789Q128 783 129 770Z" />
      ) : (
        <path fill="#fff" d="M118 328L155 313Q177 302 177 275Q175 262 160 243Q151 228 152 208Q156 202 154 196Q148 185 148 163Q150 135 168 117Q195 90 222 88Q245 88 260 104Q285 112 286 160Q285 180 279 194Q278 202 281 212Q280 232 268 246Q255 265 255 282Q256 303 276 313L315 328Q272 365 216 365Q162 365 118 328Z" />
      )}
    </svg>
  );
}

const employees = [
  { name: 'JOSEPH TAN', id: '00002' },
  { name: 'CHONG XIN YING', id: '00007', female: true },
  { name: 'MICHAEL ANGELO', id: '00012' },
  { name: 'MOHAMMAD FAHAD', id: '00009' },
];

function EmployeeList() {
  return (
    <section className="w-[1081px] pr-[43px] pl-[41px]">
      <TopBar title="Employee List" />
      <div className="flex h-[110px] items-center rounded-[27px] border-[3px] border-[#bbbcd6] pl-[30px]">
        <MdSearch className="size-[66px] text-[#85809a]" />
        <span className="ml-[33px] pt-[3px] text-[38.5px] leading-none tracking-[1.25px] text-[#85809a]">Search Employee</span>
      </div>
      <div className="mt-[41px] h-[841px] overflow-hidden rounded-[27px] bg-[#6b7ffb] p-[3px]">
        <div className="flex h-[131px] items-center justify-between pr-[65px] pb-[1px] pl-[43px] text-white">
          <span className="text-[33px] leading-none font-medium tracking-[1.5px]">Dept SALES</span>
          <MdExpandLess className="size-[66px]" />
        </div>
        <div className="h-[704px] rounded-[25px] bg-[#fefefe] px-[26px]">
          {employees.map((e, i) => (
            <div
              key={e.id}
              className={
                i < 3
                  ? 'flex h-[176px] items-center border-b-[3px] border-[#d3d3d3] pt-[3px] pr-[39px] pl-[17px]'
                  : 'flex h-[176px] items-center pr-[39px] pl-[17px]'
              }
            >
              <Avatar female={e.female} />
              <div className="ml-[45px] flex-1 pt-[10px]">
                <div className="text-[38.5px] leading-[56px] tracking-[1.1px] text-[#4a5073]">{e.name}</div>
                <div className="text-[33px] leading-[56px] tracking-[0.45px] text-[#85809a]">{e.id}</div>
              </div>
              <MdChevronRight className="size-[66px] text-[#85809a]" />
            </div>
          ))}
        </div>
      </div>
    </section>
  );
}

const week = [
  ['Sun', 23],
  ['Mon', 24],
  ['Tue', 25],
  ['Wed', 26],
  ['Thu', 27],
  ['Fri', 28],
  ['Sat', 29],
];

const iconColors = { in: 'text-[#5fbd8f]', track: 'text-[#4585f0]', out: 'text-[#fbc23c]' };

function Entry({ time, kind, status, note }) {
  return (
    <div
      className={
        note
          ? 'flex h-[163px] items-center rounded-[27px] border-[3px] border-[#bbbcd6] pr-[25px] pl-[27px]'
          : 'flex h-[136px] items-center rounded-[27px] border-[3px] border-[#bbbcd6] pr-[26px] pl-[27px]'
      }
    >
      <svg className={`size-[65px] shrink-0 overflow-visible ${iconColors[kind]}`} viewBox="0 0 65 65">
        <ClockGlyph kind={kind} />
      </svg>
      <div className={note ? 'ml-[45px] flex-1 pt-[6px] text-[#4a5073]' : 'ml-[45px] flex-1 text-[#4a5073]'}>
        <div className="text-[44px] leading-[56px] font-medium tracking-[1.8px]">{time}</div>
        {note && <div className="text-[33px] leading-[56px] tracking-[1.3px]">{note}</div>}
      </div>
      {status && <span className="text-[38.5px] leading-none font-medium tracking-[1.5px] text-[#4a5073]">{status}</span>}
      {note && <MdAttachFile className="size-[66px] text-[#85809a]" />}
    </div>
  );
}

function Timeline({ map, entries, tight }) {
  return (
    <section className="w-[1081px] px-[42px]">
      <TopBar title="Attendance Timeline" />
      <div className="flex h-[66px] items-center justify-between px-[22px]">
        <MdChevronLeft className="size-[66px] text-[#85809a]" />
        <span className="text-[44px] leading-none font-medium tracking-[0.6px] text-[#4a5073]">March 2025</span>
        <MdChevronRight className="size-[66px] text-[#85809a]" />
      </div>
      <div className="mt-[56px] grid grid-cols-7 text-center text-[38.5px] tracking-[0.5px]">
        {week.map(([day]) => (
          <div key={day} className="leading-[53px] text-[#4a5073]">
            {day}
          </div>
        ))}
      </div>
      <div className="mt-[15px] grid grid-cols-7 text-center text-[38.5px] tracking-[0.5px]">
        {week.map(([day, n]) => (
          <div
            key={day}
            className={
              n === 28
                ? 'mx-px h-[110px] rounded-[27px] border-[3px] border-[#6b7ffb] leading-[104px] text-[#4a5073]'
                : 'h-[110px] leading-[110px] text-[#85809a]'
            }
          >
            {n}
          </div>
        ))}
      </div>
      <div className="mt-[41px] mb-[28px] text-[44px] leading-[63px] font-medium text-[#4a5073]">
        <div className="tracking-[0.5px]">JOSEPH TAN</div>
        <div className="tracking-[0.8px]">Location Updates</div>
      </div>
      {map}
      <div className={tight ? 'mt-[30px] flex flex-col gap-[27.5px]' : 'mt-[55px] flex flex-col gap-[28px]'}>
        {entries.map((e, i) => (
          <Entry key={i} {...e} />
        ))}
      </div>
    </section>
  );
}

function FileRow({ name }) {
  return (
    <div className="flex h-[120px] items-center rounded-[27px] border-[3px] border-[#bbbcd6] pt-[2px] pl-[35px] text-[#4757d8]">
      <svg className="h-[55px] w-[44px] shrink-0" viewBox="0 0 16 20" fill="none" stroke="currentColor">
        <path d="M.9 1.300Q.9 .9 1.300 .9H11L15.100 5V18.700Q15.100 19.100 14.700 19.100H1.300Q.9 19.100 .9 18.700Z" strokeWidth="1.800" />
        <path d="M10.200 0H11.500L16 4.800V7.600H10.200Z" fill="currentColor" stroke="none" />
        <path d="M11.300 8.500V13a3.450 3.450 0 0 1-6.900 0V6.900a2.450 2.450 0 0 1 4.900 0V12.600a1.050 1.050 0 0 1-2.100 0V7" strokeWidth="1.350" />
      </svg>
      <span className="ml-[25px] text-[33px] leading-none tracking-[0.62px] whitespace-nowrap">{name}</span>
    </div>
  );
}

export default function App() {
  return (
    <main className="flex h-[2312px] w-[3381px] gap-[69px] overflow-hidden bg-[#fefefe] font-['Inter',sans-serif]">
      <EmployeeList />
      <Timeline
        map={<DayMap />}
        entries={[
          { time: '14:23', kind: 'in' },
          { time: '17:51', kind: 'track', status: 'Location Off' },
          { time: '18:04', kind: 'track', status: 'Outside' },
          { time: '18:04', kind: 'track', status: 'Outside' },
        ]}
      />
      <div className="relative w-[1081px]">
        <Timeline
          tight
          map={<ShiftedMap />}
          entries={[
            { time: '18:08', kind: 'track', status: 'Outside' },
            { time: '18:09', kind: 'track', status: 'Outside' },
            { time: '18:10', kind: 'track', status: 'Outside' },
            { time: '18:12', kind: 'out', note: 'emergency need leave early' },
          ]}
        />
        <div className="absolute inset-0 bg-black/54">
          <div className="mt-[875px] ml-[110px] flex h-[566px] w-[860px] flex-col gap-[14px] rounded-[77px] bg-white px-[56px] pt-[69px]">
            <FileRow name="ETMS_19ed2b50-f643-456b-bfa7-0..." />
            <FileRow name="ETMS_2aed945a-a27e-4c08-8e56-..." />
            <button className="mt-[54px] h-[110px] w-[220px] self-end rounded-full bg-[#6b7ffb] text-[33px] leading-none text-white">Close</button>
          </div>
        </div>
      </div>
    </main>
  );
}
